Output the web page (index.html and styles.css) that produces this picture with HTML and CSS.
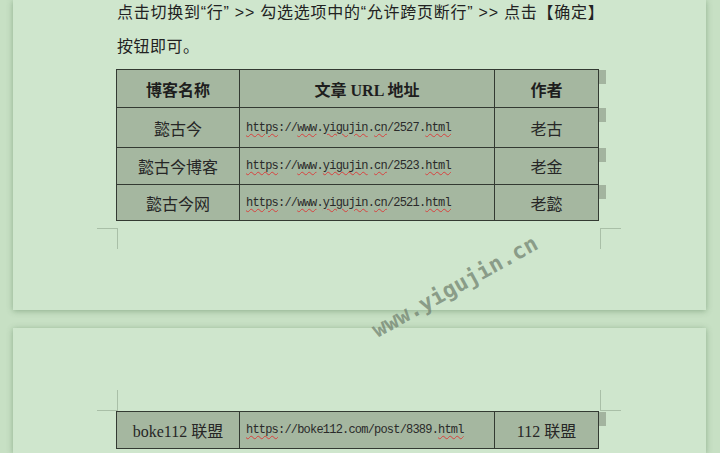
FILE: index.html
```html
<!DOCTYPE html>
<html lang="zh-CN">
<head>
<meta charset="utf-8">
<title>允许跨页断行</title>
<link rel="stylesheet" href="styles.css">
</head>
<body>
<div class="viewer">
  <section class="page page1">
    <p class="intro"><span class="l1">点击切换到“行” &gt;&gt; 勾选选项中的“允许跨页断行” &gt;&gt; 点击【确定】</span><span class="l2">按钮即可。</span></p>
    <table class="grid">
      <colgroup><col class="c1"><col class="c2"><col class="c3"><col class="c4"></colgroup>
      <tr class="h">
        <th>博客名称</th><th>文章 URL 地址</th><th>作者</th><td class="m"><span class="tab"></span></td>
      </tr>
      <tr class="r1">
        <td>懿古今</td><td class="url"><span class="sp">https</span>://<span class="sp">www</span>.<span class="sp">yigujin</span>.<span class="sp">cn</span>/2527.<span class="sp">html</span></td><td>老古</td><td class="m"><span class="tab"></span></td>
      </tr>
      <tr class="r2">
        <td>懿古今博客</td><td class="url"><span class="sp">https</span>://<span class="sp">www</span>.<span class="sp">yigujin</span>.<span class="sp">cn</span>/2523.<span class="sp">html</span></td><td>老金</td><td class="m"><span class="tab"></span></td>
      </tr>
      <tr class="r3">
        <td>懿古今网</td><td class="url"><span class="sp">https</span>://<span class="sp">www</span>.<span class="sp">yigujin</span>.<span class="sp">cn</span>/2521.<span class="sp">html</span></td><td>老懿</td><td class="m"><span class="tab"></span></td>
      </tr>
    </table>
    <div class="crops crops-bottom"><i class="mark ml"></i><i class="mark mr"></i></div>
  </section>
  <section class="page page2">
    <div class="crops crops-top"><i class="mark ml"></i><i class="mark mr"></i></div>
    <table class="grid grid-cont">
      <colgroup><col class="c1"><col class="c2"><col class="c3"><col class="c4"></colgroup>
      <tr class="r4">
        <td>boke112 联盟</td><td class="url"><span class="sp">https</span>://boke112.com/post/8389.<span class="sp">html</span></td><td>112 联盟</td><td class="m"><span class="tab"></span></td>
      </tr>
    </table>
  </section>
</div>
<div class="watermark">www.yigujin.cn</div>
</body>
</html>
```
FILE: styles.css
```css
html, body {
  margin: 0;
  height: 100%;
  overflow: hidden;
}
body {
  background: #c7e0c4;
  font-family: "Liberation Serif", "Noto Sans CJK SC", serif;
  color: #262626;
  position: relative;
}
.viewer {
  display: flex;
  flex-direction: column;
  gap: 18px;
  padding-left: 13px;
}
.page {
  box-sizing: border-box;
  width: 693px;
  background: #cfe6cd;
  box-shadow: 0 1px 6px rgba(70, 110, 70, 0.45);
  padding-left: 104px;
}
.page1 {
  height: 310px;
}
.page2 {
  height: 125px;
  padding-top: 62px;
}
.intro {
  margin: -4px 0 0 0;
  font-family: "Liberation Sans", "Noto Sans CJK SC", sans-serif;
  font-size: 16px;
  line-height: 34px;
  color: #222;
}
.intro .l1 {
  display: block;
  white-space: nowrap;
  letter-spacing: 0.75px;
}
.intro .l2 {
  display: block;
  letter-spacing: 0.5px;
}
.grid {
  border-collapse: collapse;
  table-layout: fixed;
  width: 489px;
  margin: 5px 0 0 -1px;
  font-size: 16px;
}
.grid-cont {
  margin-top: 0;
}
.c1 { width: 123px; }
.c2 { width: 255px; }
.c3 { width: 104px; }
.c4 { width: 7px; }
.grid th, .grid td {
  border: 1px solid #333a32;
  background: #a5b7a0;
  text-align: center;
  vertical-align: middle;
  padding: 0;
  color: #262626;
  white-space: nowrap;
}
.grid th {
  font-weight: bold;
  color: #1e1e1e;
}
.grid td.url {
  text-align: left;
  padding-left: 6px;
  font-family: "Liberation Mono", monospace;
  font-size: 12px;
  letter-spacing: -0.8px;
  color: #2a2a2a;
}
.sp {
  text-decoration: underline wavy #d8413e;
  text-decoration-thickness: 1px;
  text-underline-offset: 2px;
}
.grid td.m {
  border: none;
  background: transparent;
  vertical-align: top;
}
.tab {
  display: block;
  width: 7px;
  height: 14px;
  background: #a3b49f;
}
.h { height: 38px; }
.r1 { height: 40px; }
.r2 { height: 37px; }
.r3 { height: 36px; }
.r4 { height: 37px; }
.crops {
  display: flex;
  justify-content: space-between;
  width: 524px;
  margin-left: -20px;
}
.crops-bottom {
  margin-top: 7px;
}
.mark {
  display: block;
  box-sizing: border-box;
  width: 21px;
  height: 21px;
  border: 0 solid #a9bfa7;
}
.crops-bottom .ml { border-top-width: 1px; border-right-width: 1px; }
.crops-bottom .mr { border-top-width: 1px; border-left-width: 1px; }
.crops-top .ml { border-bottom-width: 1px; border-right-width: 1px; }
.crops-top .mr { border-bottom-width: 1px; border-left-width: 1px; }
.watermark {
  position: absolute;
  left: 358px;
  top: 274px;
  width: 194px;
  text-align: center;
  font-family: "DejaVu Sans Mono", monospace;
  font-weight: bold;
  font-size: 22px;
  line-height: 26px;
  color: rgba(112, 128, 110, 0.72);
  transform: rotate(-29deg);
  z-index: 5;
}
```
